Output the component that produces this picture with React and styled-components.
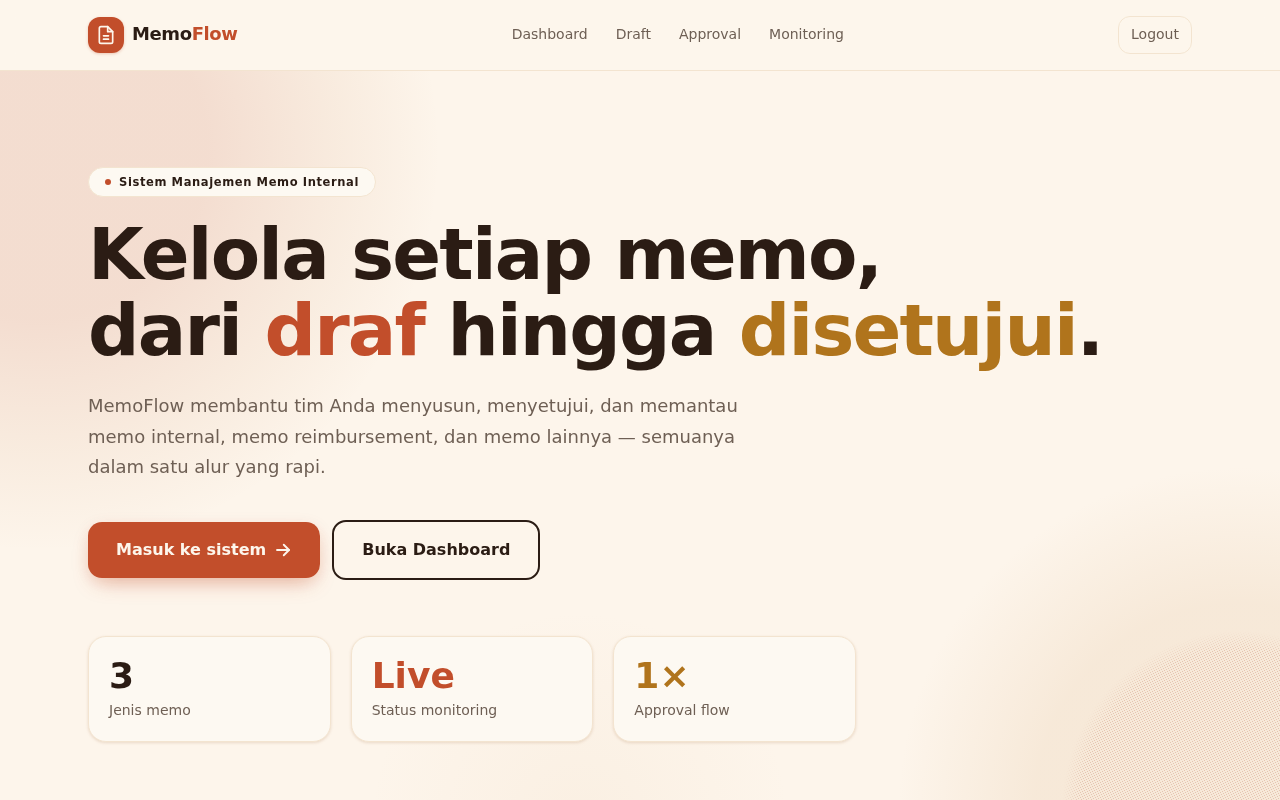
import React from 'react';
import styled, { createGlobalStyle } from 'styled-components';

const GlobalStyle = createGlobalStyle`
  html, body {
    margin: 0;
    padding: 0;
    background: #fdf5eb;
    font-family: "DejaVu Sans", sans-serif;
    color: #2b1c14;
  }
  * {
    box-sizing: border-box;
  }
`;

// 5px tile with a scattered lattice of single pixels, for the stippled corner
const stippleOffsets = [0, 1, 2, 3, 4].map((x) => [x, (2 * x) % 5]);
const stippleDot =
  'radial-gradient(circle at 0.5px 0.5px, rgba(190, 115, 90, 0.3) 0.7px, transparent 0.7px)';

const Page = styled.div`
  height: 800px;
  overflow: hidden;
`;

const Nav = styled.nav`
  height: 71px;
  display: flex;
  align-items: center;
  justify-content: space-between;
  padding: 0 88px;
  background: rgba(253, 246, 236, 0.9);
  backdrop-filter: blur(10px);
  border-bottom: 1px solid #f3e4d0;
`;

const Brand = styled.div`
  display: flex;
  align-items: center;
  gap: 8px;
  font-size: 18px;
  line-height: 24px;
  font-weight: 700;
  letter-spacing: -0.4px;
`;

const BrandName = styled.span`
  margin-bottom: 2px;
`;

const LogoMark = styled.div`
  width: 36px;
  height: 36px;
  border-radius: 12px;
  background: #c24e2b;
  color: #fdf6ec;
  display: flex;
  align-items: center;
  justify-content: center;
  box-shadow: 0 1px 3px rgba(194, 78, 43, 0.3);
`;

const Accent = styled.span`
  color: ${(p) => p.$color};
`;

const NavLinks = styled.div`
  display: flex;
  gap: 28px;
  margin-bottom: 2px;
  font-size: 14px;
  line-height: 20px;
  color: #6e5f54;
`;

const LogoutButton = styled.button`
  height: 38px;
  padding: 0 12px 2px;
  background: transparent;
  border: 1px solid #f3e4d0;
  border-radius: 12px;
  font: inherit;
  font-size: 14px;
  line-height: 20px;
  color: #6e5f54;
`;

const Hero = styled.main`
  position: relative;
  height: 729px;
  padding: 96px 88px 0;
  overflow: hidden;
  background:
    radial-gradient(circle 342px at 1240px 738px, rgba(225, 190, 150, 0.22) 60%, transparent 100%),
    radial-gradient(circle 210px at 580px 750px, rgba(225, 190, 150, 0.1), transparent 100%),
    radial-gradient(
      circle 400px at 40px 80px,
      rgba(190, 85, 55, 0.15) 42%,
      rgba(190, 110, 60, 0.07) 75%,
      transparent 100%
    ),
    #fdf5eb;

  /* stippled patch in the bottom right corner */
  &::before {
    content: '';
    position: absolute;
    left: 1062px;
    top: 560px;
    width: 356px;
    height: 356px;
    background-image: ${stippleOffsets.map(() => stippleDot).join(', ')};
    background-size: 5px 5px;
    background-position: ${stippleOffsets.map(([x, y]) => `${x}px ${y}px`).join(', ')};
    mask-image: radial-gradient(circle closest-side, #000 90%, transparent 100%);
  }
`;

const Content = styled.div`
  position: relative;
  will-change: transform;
`;

const Pill = styled.div`
  display: inline-flex;
  align-items: center;
  gap: 8px;
  height: 30px;
  padding: 0 16px;
  background: #fdf9f2;
  border: 1px solid #f3e4d0;
  border-radius: 999px;
  font-size: 11.52px;
  font-weight: 700;
  letter-spacing: 0.6px;
`;

const Dot = styled.span`
  width: 6px;
  height: 6px;
  border-radius: 50%;
  background: #c24e2b;
`;

const Title = styled.h1`
  margin: 20px 0 0;
  font-size: 72px;
  line-height: 75.6px;
  font-weight: 700;
  letter-spacing: -1.8px;
  white-space: nowrap;
`;

const Lead = styled.p`
  margin: 22.8px 0 0;
  width: 680px;
  font-size: 18px;
  line-height: 30.6px;
  color: #6e5f54;
`;

const Actions = styled.div`
  display: flex;
  align-items: center;
  gap: 12px;
  margin-top: 37px;
`;

const PrimaryButton = styled.button`
  height: 56px;
  padding: 0 28px;
  display: flex;
  align-items: center;
  gap: 8px;
  background: #c24e2b;
  color: #fdf6ec;
  border: none;
  border-radius: 14px;
  font: inherit;
  font-size: 16px;
  line-height: 22px;
  font-weight: 700;
  box-shadow: 0 10px 22px -8px rgba(194, 78, 43, 0.4), 0 4px 16px rgba(194, 78, 43, 0.1);
`;

const SecondaryButton = styled.button`
  height: 60px;
  padding: 0 28px;
  background: transparent;
  color: #2b1c14;
  border: 2px solid #2b1c14;
  border-radius: 14px;
  font: inherit;
  font-size: 16px;
  line-height: 22px;
  font-weight: 700;
`;

const Stats = styled.div`
  display: grid;
  grid-template-columns: repeat(3, 1fr);
  gap: 20px;
  width: 768px;
  margin-top: 56px;
`;

const StatCard = styled.div`
  height: 106px;
  padding: 19px 20px;
  background: #fdf9f2;
  border: 1px solid #f3e4d0;
  border-radius: 18px;
  box-shadow: 0 1px 3px rgba(150, 90, 40, 0.18);
`;

const StatValue = styled.div`
  font-size: 36px;
  line-height: 40px;
  font-weight: 700;
  color: ${(p) => p.$color};
`;

const StatLabel = styled.div`
  margin-top: 4px;
  font-size: 14px;
  line-height: 20px;
  color: #6e5f54;
`;

const stats = [
  { value: '3', label: 'Jenis memo', color: '#2b1c14' },
  { value: 'Live', label: 'Status monitoring', color: '#c24e2b' },
  { value: '1×', label: 'Approval flow', color: '#b0741c' },
];

const DocIcon = () => (
  <svg width="20" height="20" viewBox="0 0 24 24" fill="none" stroke="currentColor" strokeWidth="2" strokeLinecap="round" strokeLinejoin="round">
    <path d="M14 2H6a2 2 0 0 0-2 2v16a2 2 0 0 0 2 2h12a2 2 0 0 0 2-2V8z" />
    <path d="M14 2v6h6" />
    <path d="M9 13h6" />
    <path d="M9 17h6" />
  </svg>
);

const ArrowIcon = () => (
  <svg width="18" height="18" viewBox="0 0 24 24" fill="none" stroke="currentColor" strokeWidth="2.5" strokeLinecap="round" strokeLinejoin="round">
    <path d="M4 12h16" />
    <path d="M13 5l7 7-7 7" />
  </svg>
);

export default function App() {
  return (
    <Page>
      <GlobalStyle />
      <Nav>
        <Brand>
          <LogoMark>
            <DocIcon />
          </LogoMark>
          <BrandName>
            Memo<Accent $color="#c24e2b">Flow</Accent>
          </BrandName>
        </Brand>
        <NavLinks>
          <span>Dashboard</span>
          <span>Draft</span>
          <span>Approval</span>
          <span>Monitoring</span>
        </NavLinks>
        <LogoutButton>Logout</LogoutButton>
      </Nav>

      <Hero>
        <Content>
          <Pill>
            <Dot />
            Sistem Manajemen Memo Internal
          </Pill>
          <Title>
            Kelola setiap memo,
            <br />
            dari <Accent $color="#c24e2b">draf</Accent> hingga{' '}
            <Accent $color="#b0741c">disetujui</Accent>.
          </Title>
          <Lead>
            MemoFlow membantu tim Anda menyusun, menyetujui, dan memantau memo internal, memo
            reimbursement, dan memo lainnya — semuanya dalam satu alur yang rapi.
          </Lead>
          <Actions>
            <PrimaryButton>
              Masuk ke sistem
              <ArrowIcon />
            </PrimaryButton>
            <SecondaryButton>Buka Dashboard</SecondaryButton>
          </Actions>
          <Stats>
            {stats.map((s) => (
              <StatCard key={s.label}>
                <StatValue $color={s.color}>{s.value}</StatValue>
                <StatLabel>{s.label}</StatLabel>
              </StatCard>
            ))}
          </Stats>
        </Content>
      </Hero>
    </Page>
  );
}
